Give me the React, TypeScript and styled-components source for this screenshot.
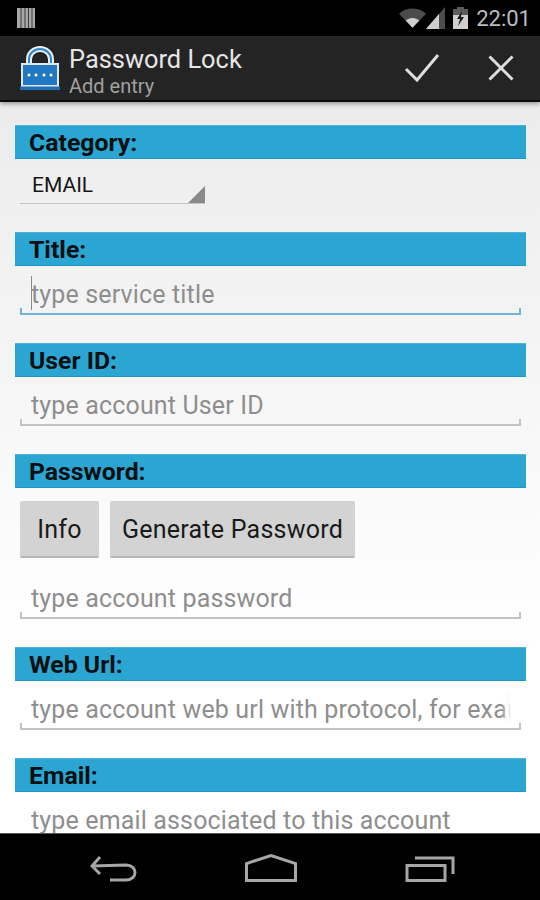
import React from 'react';
import styled, { createGlobalStyle } from 'styled-components';

const GlobalStyle = createGlobalStyle`
  html, body {
    margin: 0;
    padding: 0;
    background: #000;
    font-family: Roboto, "Liberation Sans", sans-serif;
  }
  * {
    box-sizing: border-box;
  }
`;

const Screen = styled.div`
  width: 540px;
  height: 900px;
  display: flex;
  flex-direction: column;
  overflow: hidden;
`;

const StatusBar = styled.div`
  height: 36px;
  flex: none;
  background: #000;
  display: flex;
  align-items: center;
  padding: 0 9px 0 17px;
  color: #bcbcbc;
`;

const StatusRight = styled.div`
  margin-left: auto;
  display: flex;
  align-items: center;
`;

const BatterySlot = styled.span`
  display: flex;
  margin-left: 8px;
`;

const Clock = styled.span`
  font-size: 22px;
  margin-left: 8px;
  color: #bdbdbd;
`;

const ActionBar = styled.div`
  height: 66px;
  flex: none;
  background: #242424;
  display: flex;
  align-items: center;
  padding: 0 26px 0 20px;
  border-bottom: 2px solid #0c0c0c;
  position: relative;
  z-index: 1;
  box-shadow: 0 2px 4px rgba(0, 0, 0, 0.35);
`;

const TitleBlock = styled.div`
  margin-left: 9px;
  padding-top: 5px;
  display: flex;
  flex-direction: column;
`;

const AppTitle = styled.div`
  font-size: 25.4px;
  line-height: 31px;
  color: #e6e6e6;
`;

const AppSubtitle = styled.div`
  font-size: 20px;
  line-height: 22px;
  color: #a0a0a0;
`;

const Actions = styled.div`
  margin-left: auto;
  display: flex;
  align-items: center;
  gap: 48px;
`;

const Content = styled.div`
  flex: 1;
  min-height: 0;
  overflow: hidden;
  padding: 23px 14px 0 15px;
  background: linear-gradient(#ececec, #ffffff 75%);
`;

const SectionBar = styled.div`
  height: 34px;
  background: #2ba6d3;
  border-top: 1px solid #4fb3d9;
  border-bottom: 1px solid #1f97c6;
  padding-left: 14px;
  font-size: 24.8px;
  font-weight: 700;
  line-height: 34px;
  color: #0a0f12;
`;

const Section = styled.section`
  margin-bottom: 28px;
`;

const Spinner = styled.div`
  position: relative;
  width: 185px;
  height: 45px;
  margin-left: 5px;
  padding: 13px 0 0 12px;
  font-size: 21px;
  line-height: 26px;
  color: #161616;
  border-bottom: 1.5px solid #c4c4c4;

  &::after {
    content: '';
    position: absolute;
    right: 0;
    bottom: 0;
    border-style: solid;
    border-width: 0 0 17px 17px;
    border-color: transparent transparent #8a8a8a transparent;
  }
`;

const Field = styled.div<{ $focused?: boolean }>`
  position: relative;
  height: 49px;
  margin: 0 5px;
  padding-left: 11px;
  border-bottom: 2px solid ${(props) => (props.$focused ? '#6fb2dc' : '#c2c2c2')};

  &::before,
  &::after {
    content: '';
    position: absolute;
    bottom: 0;
    width: 2px;
    height: 5px;
    background: ${(props) => (props.$focused ? '#6fb2dc' : '#c2c2c2')};
  }
  &::before {
    left: 0;
  }
  &::after {
    right: 0;
  }
`;

const FieldInput = styled.input`
  display: block;
  width: 480px;
  height: 47px;
  padding: 9px 0 0;
  border: none;
  outline: none;
  background: transparent;
  font-family: inherit;
  font-size: 25px;
  letter-spacing: 0.15px;
  color: #222;

  &::placeholder {
    color: #8e8e8e;
    opacity: 1;
  }
`;

const Caret = styled.span`
  position: absolute;
  left: 11px;
  top: 10px;
  width: 1px;
  height: 34px;
  background: #8a8a8a;
`;

const Fade = styled.span`
  position: absolute;
  right: 10px;
  top: 10px;
  width: 10px;
  height: 34px;
  background: linear-gradient(to right, rgba(251, 251, 251, 0), #fbfbfb);
`;

const ButtonRow = styled.div`
  display: flex;
  gap: 11px;
  margin: 13px 5px 12px;
`;

const FlatButton = styled.button`
  height: 57px;
  padding: 2px 0 0;
  border: none;
  border-bottom: 2px solid #b4b4b4;
  border-radius: 2px;
  background: #d3d3d3;
  font-family: inherit;
  font-size: 25px;
  letter-spacing: 0.25px;
  color: #1a1a1a;
`;

const InfoButton = styled(FlatButton)`
  width: 79px;
`;

const GenerateButton = styled(FlatButton)`
  width: 245px;
`;

const NavBar = styled.div`
  height: 67px;
  flex: none;
  background: #000;
  display: flex;
  align-items: center;
  border-top: 1px solid #555;
`;

const NavIcon = styled.svg`
  flex: none;
  fill: none;
  stroke: #a6a6a6;
  stroke-width: 3;
`;

const NavRow = styled.div`
  display: flex;
  width: 100%;
  justify-content: space-between;
  padding: 0 85px 0 90px;
  align-items: flex-end;
  margin-top: 1px;
`;

const SimIcon = () => (
  <svg width="18" height="20" viewBox="0 0 18 20">
    <path d="M0 0h18v20H0z" fill="#a8a8a8" />
    <path d="M4 0v20M8 0v20M11.5 0v20M15 0v20" stroke="#3a3a3a" strokeWidth="1" />
  </svg>
);

const WifiIcon = () => (
  <svg width="27" height="20" viewBox="0 0 28 20">
    <path d="M0 5.5C7.5-1.8 20.5-1.8 28 5.5L14 20z" fill="#4c4c4c" />
    <path d="M7 12.6c4-3.6 10-3.6 14 0L14 20z" fill="#cfcfcf" />
  </svg>
);

const SignalIcon = () => (
  <svg width="19" height="22" viewBox="0 0 19 22">
    <path d="M0 22L19 0v22z" fill="#4c4c4c" />
    <path d="M0 22L13 7v15z" fill="#cfcfcf" />
  </svg>
);

const BatteryIcon = () => (
  <svg width="15" height="22" viewBox="0 0 15 22">
    <path d="M4 0h7v2h4v20H0V2h4z" fill="#5c5c5c" />
    <path d="M0 8h15v14H0z" fill="#cfcfcf" />
    <path d="M9 4L4 12h3l-2 7 6-9H8z" fill="#1a1a1a" />
  </svg>
);

const LockIcon = () => (
  <svg width="40" height="44" viewBox="0 0 40 44">
    <path
      d="M9 20v-7a11 10 0 0 1 22 0v7"
      fill="none"
      stroke="#e8eef4"
      strokeWidth="6"
    />
    <path d="M9 20v-7a11 10 0 0 1 22 0v7" fill="none" stroke="#2f86cf" strokeWidth="2" />
    <rect x="2" y="18" width="36" height="22" fill="#2378c4" stroke="#dfe9f2" strokeWidth="2" />
    <path d="M0 40.5h40V44H0z" fill="#1f6fb8" />
    <circle cx="9" cy="29" r="1.5" fill="#fff" />
    <circle cx="16" cy="29" r="1.5" fill="#fff" />
    <circle cx="24" cy="29" r="1.5" fill="#fff" />
    <circle cx="31" cy="29" r="1.5" fill="#fff" />
  </svg>
);

const CheckIcon = () => (
  <svg width="36" height="30" viewBox="0 0 36 30">
    <path d="M2 16l11 11L34 2" fill="none" stroke="#dedede" strokeWidth="3" />
  </svg>
);

const CloseIcon = () => (
  <svg width="26" height="26" viewBox="0 0 26 26">
    <path d="M1.5 1.5l23 23M24.5 1.5l-23 23" fill="none" stroke="#dedede" strokeWidth="3" />
  </svg>
);

export default function App() {
  return (
    <Screen>
      <GlobalStyle />
      <StatusBar>
        <SimIcon />
        <StatusRight>
          <WifiIcon />
          <SignalIcon />
          <BatterySlot>
            <BatteryIcon />
          </BatterySlot>
          <Clock>22:01</Clock>
        </StatusRight>
      </StatusBar>
      <ActionBar>
        <LockIcon />
        <TitleBlock>
          <AppTitle>Password Lock</AppTitle>
          <AppSubtitle>Add entry</AppSubtitle>
        </TitleBlock>
        <Actions>
          <CheckIcon />
          <CloseIcon />
        </Actions>
      </ActionBar>
      <Content>
        <Section>
          <SectionBar>Category:</SectionBar>
          <Spinner>EMAIL</Spinner>
        </Section>
        <Section>
          <SectionBar>Title:</SectionBar>
          <Field $focused>
            <FieldInput placeholder="type service title" />
            <Caret />
          </Field>
        </Section>
        <Section>
          <SectionBar>User ID:</SectionBar>
          <Field>
            <FieldInput placeholder="type account User ID" />
          </Field>
        </Section>
        <Section>
          <SectionBar>Password:</SectionBar>
          <ButtonRow>
            <InfoButton>Info</InfoButton>
            <GenerateButton>Generate Password</GenerateButton>
          </ButtonRow>
          <Field>
            <FieldInput placeholder="type account password" />
          </Field>
        </Section>
        <Section>
          <SectionBar>Web Url:</SectionBar>
          <Field>
            <FieldInput placeholder="type account web url with protocol, for example http://www" />
            <Fade />
          </Field>
        </Section>
        <Section>
          <SectionBar>Email:</SectionBar>
          <Field>
            <FieldInput placeholder="type email associated to this account" />
          </Field>
        </Section>
      </Content>
      <NavBar>
        <NavRow>
          <NavIcon width="47" height="26" viewBox="0 0 47 26">
            <path d="M10 1L2 10l8 8M2 10l34-1c12 0 12 15 0 15H20" />
          </NavIcon>
          <NavIcon width="52" height="28" viewBox="0 0 52 28">
            <path d="M1.5 26.5V9.5L26 1.5l24.5 8v17z" />
          </NavIcon>
          <NavIcon width="50" height="26" viewBox="0 0 50 26">
            <path d="M2 9.5h38v15H2zM10 2h38v16" />
          </NavIcon>
        </NavRow>
      </NavBar>
    </Screen>
  );
}
